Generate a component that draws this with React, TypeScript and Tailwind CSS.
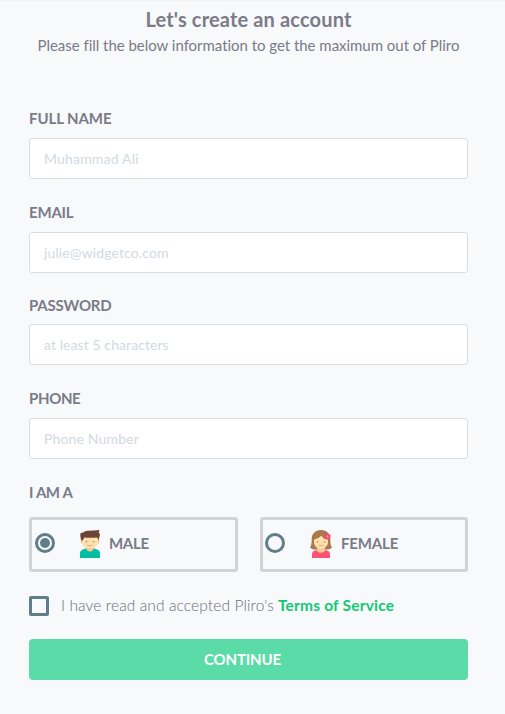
import React from "react";

type FieldProps = {
  label: string;
  placeholder: string;
  type?: string;
  className: string;
  labelTracking: string;
  inputTracking: string;
};

function Field({ label, placeholder, type = "text", className, labelTracking, inputTracking }: FieldProps) {
  return (
    <label className={`block ${className}`}>
      <span className={`block h-5 text-[15px] leading-5 font-bold whitespace-nowrap ${labelTracking}`}>{label}</span>
      <input
        type={type}
        placeholder={placeholder}
        className={`block h-[41px] w-full rounded-[3px] border border-[#dcdde0] bg-white px-[14px] text-[14px] outline-none placeholder:text-[#d3d9e2] ${inputTracking}`}
      />
    </label>
  );
}

function BoyIcon() {
  return (
    <svg viewBox="0 0 22 28" className="h-7 w-[22px] shrink-0">
      <path d="M1 28v-5c0-2.500 2-3.500 6-4.500h8c4 1 6 2 6 4.500v5z" fill="#04bda5" />
      <path d="M7.500 16h7v3.500c-1 2.500-6 2.500-7 0z" fill="#f4c78e" />
      <ellipse cx="2.800" cy="11.500" rx="1.200" ry="2" fill="#f4c78e" />
      <ellipse cx="19.200" cy="11.500" rx="1.200" ry="2" fill="#f4c78e" />
      <path d="M3 5h16v7c0 4.500-4 6.500-8 6.500s-8-2-8-6.500z" fill="#ffe0ac" />
      <path d="M2.400 10.500C1.500 8 1 5 1.500 3.200L4 2.500c3-2.800 10-1.300 16.500-2.500l-.7 2.400L21 4.500l-1.400 6-1.300-3c-5 .3-9 .2-13 0l-1.600 3z" fill="#6b4436" />
      <circle cx="7.500" cy="11.800" r=".8" fill="#a9805a" />
      <circle cx="14.500" cy="11.800" r=".8" fill="#a9805a" />
      <path d="M8.500 15.200q2.500 1.200 5 0" fill="none" stroke="#e0a07a" strokeWidth=".9" />
    </svg>
  );
}

function GirlIcon() {
  return (
    <svg viewBox="0 0 22 28" className="h-7 w-[22px] shrink-0">
      <path d="M11 0c6 0 9.300 4 9.300 9 0 4 .3 6.500 1.700 8.500-2 2-4.500 2.200-8 2H8c-3.500.2-6 0-8-2C1.400 15.500 1.700 13 1.700 9 1.700 4 5 0 11 0z" fill="#a9784f" />
      <path d="M2 28v-4c0-2.500 2-3.500 5-4h8c3 .5 5 1.500 5 4v4z" fill="#ff5272" />
      <path d="M7 17h8v3.500c-1 3-7 3-8 0z" fill="#f6ca91" />
      <path d="M4 9.500c3-1 6-2 7.500-4 1.500 3 3.500 4 6.500 4V12c0 4-3 6.500-7 6.500S4 16 4 12z" fill="#ffe0ac" />
      <circle cx="7.500" cy="12" r=".8" fill="#a9805a" />
      <circle cx="14.500" cy="12" r=".8" fill="#a9805a" />
      <path d="M8.500 15.200q2.500 1.200 5 0" fill="none" stroke="#e0a07a" strokeWidth=".9" />
      <g fill="#ff4771">
        <circle cx="15.700" cy="6" r="1.400" />
        <circle cx="17.500" cy="4.700" r="1.400" />
        <circle cx="19.300" cy="6" r="1.400" />
        <circle cx="18.600" cy="8" r="1.400" />
        <circle cx="16.400" cy="8" r="1.400" />
      </g>
      <circle cx="17.500" cy="6.500" r="1" fill="#ffa7b7" />
    </svg>
  );
}

function Radio({ checked }: { checked: boolean }) {
  return (
    <span className="mb-[2px] flex size-5 shrink-0 items-center justify-center rounded-full border-3 border-[#607d8b]">
      {checked && <span className="size-[10px] rounded-full bg-[#607d8b]" />}
    </span>
  );
}

export default function App() {
  return (
    <main className="h-[714px] w-[505px] overflow-hidden border-t border-[#f1f2f5] bg-[#f8f9fb] font-['Lato','Open_Sans',sans-serif] text-[#7b7b88]">
      <header className="flex w-[497px] flex-col items-center whitespace-nowrap">
        <h1 className="mt-[5px] text-[20px] leading-[26px] font-bold tracking-[0.15px]">Let's create an account</h1>
        <p className="mt-[3px] text-[15px] leading-5 tracking-[-0.03px]">Please fill the below information to get the maximum out of Pliro</p>
      </header>

      <form className="ml-[29px] w-[439px]">
        <Field className="mt-[53px]" label="FULL NAME" placeholder="Muhammad Ali" labelTracking="tracking-[-0.08px]" inputTracking="mt-[10px] tracking-[0.18px]" />
        <Field className="mt-[23px]" label="EMAIL" placeholder="julie@widgetco.com" labelTracking="tracking-[-0.2px]" inputTracking="mt-[10px] tracking-[0.12px]" />
        <Field className="mt-[22px]" label="PASSWORD" placeholder="at least 5 characters" type="password" labelTracking="tracking-[-0.2px]" inputTracking="mt-[9px] tracking-[0.08px]" />
        <Field className="mt-[23px]" label="PHONE" placeholder="Phone Number" labelTracking="tracking-[-0.35px]" inputTracking="mt-[10px] tracking-[0.15px]" />

        <div className="mt-[23px] h-5 text-[15px] leading-5 font-bold tracking-[-0.5px] [word-spacing:0.3px]">I AM A</div>
        <div className="mt-[15px] flex justify-between">
          <div className="flex h-[55px] w-[209px] items-center rounded-[3px] border-3 border-[#d2d3d4] pb-[2px] pl-[3px] text-[15px] font-bold">
            <Radio checked />
            <span className="ml-6 flex items-center gap-2"><span><BoyIcon /></span><span className="tracking-[-0.3px]">MALE</span></span>
          </div>
          <div className="flex h-[55px] w-[208px] items-center rounded-[3px] border-3 border-[#d2d3d4] pb-[2px] pl-[2px] text-[15px] font-bold">
            <Radio checked={false} />
            <span className="ml-[25px] flex items-center gap-[9px]"><span><GirlIcon /></span><span className="tracking-[-0.15px]">FEMALE</span></span>
          </div>
        </div>

        <div className="mt-6 flex h-5 items-center whitespace-nowrap">
          <span className="h-5 w-5 shrink-0 rounded-[2px] border-3 border-[#607d8b]" />
          <span className="ml-3 text-[15.5px] font-light tracking-[0.11px] text-[#6c6c78]">I have read and accepted Pliro's</span>
          <a className="ml-1 text-[15.5px] font-bold tracking-[0.2px] text-[#12c875]">Terms of Service</a>
        </div>

        <button type="button" className="mt-[23px] flex h-[41px] w-full items-center justify-center rounded-[4px] bg-[#5bdba7] pr-[12px] text-[15px] font-bold text-white">
          <span className="tracking-[-0.15px]">CONTINUE</span>
        </button>
      </form>
    </main>
  );
}
